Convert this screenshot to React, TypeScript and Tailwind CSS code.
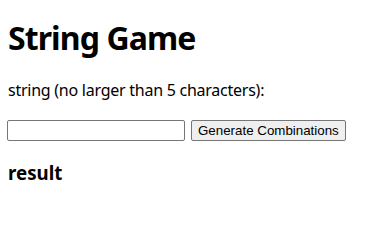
export default function App() {
    return (
        <div className="m-2 font-['Noto_Sans',sans-serif] text-black">
            <h1 className="mt-[16px] mb-[21px] text-[32px] leading-[43px] font-bold tracking-[-0.9px]">String Game</h1>
            <p className="mt-[14px] mb-[19px] text-base leading-[21px] tracking-[-0.25px]">string (no larger than 5 characters):</p>
            <div className="-ml-px flex items-center gap-[6px]">
                <input
                    type="text"
                    className="h-[21px] w-[178px] rounded-[2px] border border-[#767676] bg-white px-[2px] font-['Liberation_Sans',sans-serif] text-[13.33px]"
                />
                <button className="h-[21px] rounded-[2px] border border-[#767676] bg-[#efefef] px-[6px] font-['Liberation_Sans',sans-serif] text-[13.33px] leading-none">
                    Generate Combinations
                </button>
            </div>
            <h3 className="mt-[19px] text-[18.72px] leading-[25px] font-bold">result</h3>
        </div>
    );
}
